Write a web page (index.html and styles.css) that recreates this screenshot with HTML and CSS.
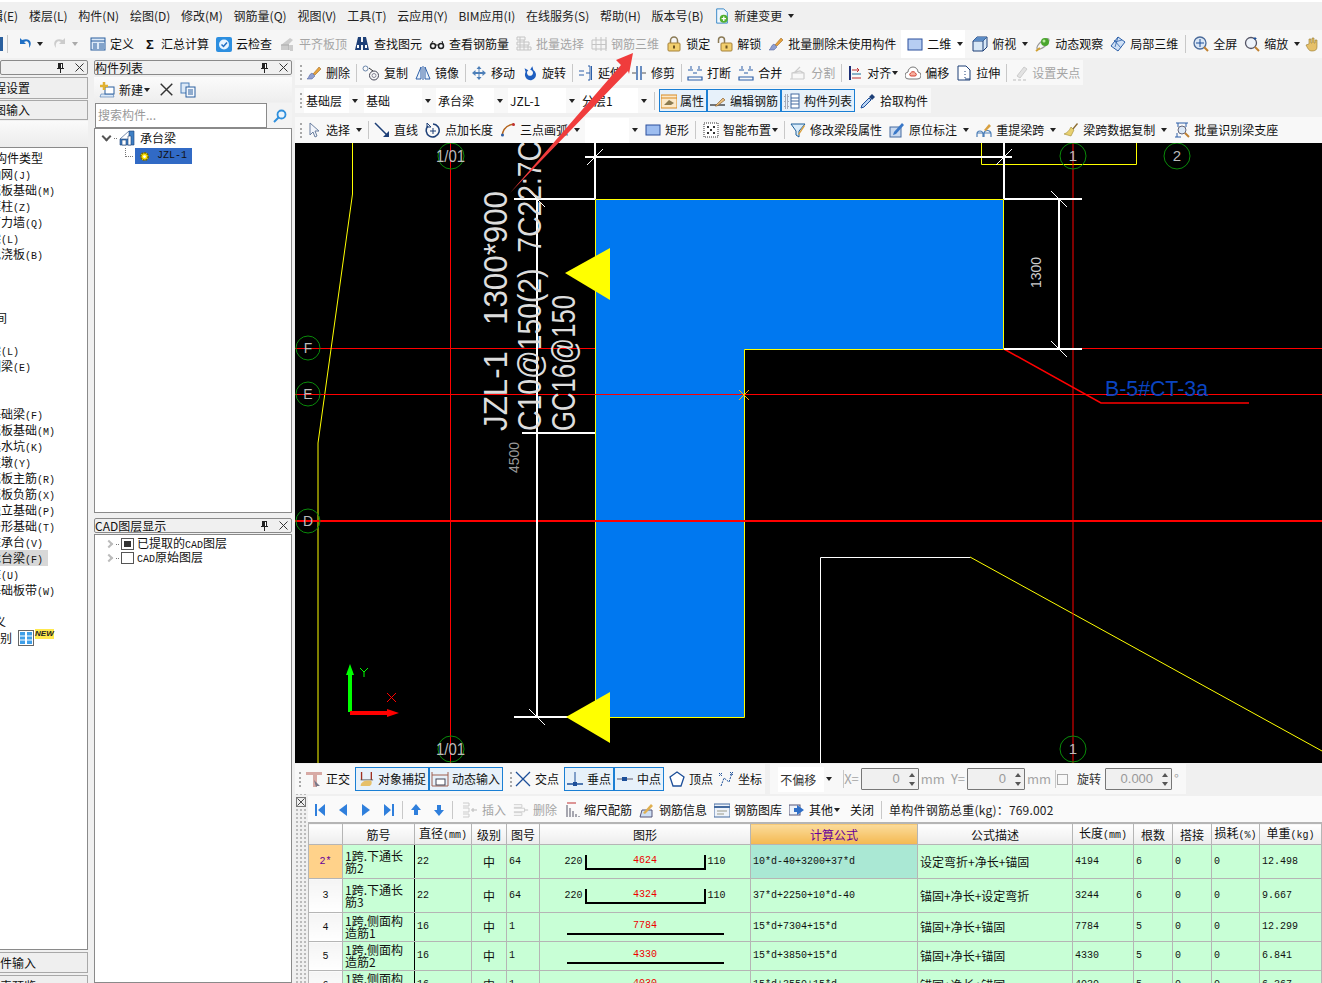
FILE: index.html
```html
<!DOCTYPE html>
<html lang="zh-CN">
<head>
  <meta charset="UTF-8" />
  <title>钢筋算量</title>
  <link rel="stylesheet" href="styles.css">
</head>
<body>
<svg class="defs">
  <symbol id="undo" viewBox="0 0 16 16"><path d="M3 2v6h6L7 6c3-2 6 0 5 6 4-5 1-11-7-8z" fill="#1f6fc4"/></symbol>
  <symbol id="redo" viewBox="0 0 16 16"><path d="M13 2v6H7l2-2c-3-2-6 0-5 6-4-5-1-11 7-8z" fill="#ccc"/></symbol>
  <symbol id="def" viewBox="0 0 16 16"><rect x="1" y="2" width="14" height="12" fill="#dce9f7" stroke="#2a5f9e"/><path d="M1 5h14M9 8h5M9 10h5M9 12h5M3 8h4M3 10h4M3 12h4" stroke="#2a5f9e"/></symbol>
  <symbol id="cloud" viewBox="0 0 16 16"><rect x="0" y="1" width="16" height="15" rx="2" fill="#2d8fe0"/><circle cx="8" cy="8.500" r="5" fill="#e8f4ff"/><path d="M5.500 8.500l2 2 3.500-4" stroke="#1f6fc4" stroke-width="1.500" fill="none"/></symbol>
  <symbol id="flat" viewBox="0 0 16 16"><path d="M2 14V9l9-7 3 2-4 4v6zM11 15V9h3v6z" fill="#ccc"/><path d="M2 9h8v5" stroke="#aaa" fill="none"/></symbol>
  <symbol id="binoc" viewBox="0 0 16 16"><path d="M4 1h3v5h2V1h3l3 13h-6V9H7v5H1z" fill="#1d3f77"/><path d="M3 9h2v3H3zM11 9h2v3h-2z" fill="#fff"/></symbol>
  <symbol id="glass" viewBox="0 0 16 16"><circle cx="4" cy="10" r="2.500" fill="none" stroke="#222" stroke-width="1.500"/><circle cx="12" cy="10" r="2.500" fill="none" stroke="#222" stroke-width="1.500"/><path d="M6 9h4M2 8l2-3M14 8l-1-3" stroke="#222"/></symbol>
  <symbol id="gridg" viewBox="0 0 16 16"><path d="M1 1h8v3H1zM1 6h12v3H1zM1 11h14v3H1zM4 1v13M8 4v10M12 9v5" fill="none" stroke="#c4c4c4"/></symbol>
  <symbol id="grid3" viewBox="0 0 16 16"><path d="M1 4h14v9H1zM1 8.500h14M5 1v14M10 1v14M15 1v14" fill="none" stroke="#c4c4c4"/></symbol>
  <symbol id="lock" viewBox="0 0 16 16"><path d="M4.500 7V4.500a3.500 3.500 0 0 1 7 0V7" fill="none" stroke="#8a7a55" stroke-width="1.500"/><rect x="2" y="7" width="12" height="8" rx="1" fill="#f2cf6e" stroke="#a5813a"/><rect x="7" y="9.500" width="2" height="3" fill="#6b5220"/></symbol>
  <symbol id="unlock" viewBox="0 0 16 16"><path d="M1.500 7V4a3 3 0 0 1 6 0v3" fill="none" stroke="#8a7a55" stroke-width="1.500"/><rect x="4" y="7" width="11" height="8" rx="1" fill="#f2cf6e" stroke="#a5813a"/><rect x="8.500" y="9.500" width="2" height="3" fill="#6b5220"/></symbol>
  <symbol id="brush" viewBox="0 0 16 16"><path d="M7 9l6-7 2 2-6 6z" fill="#e8a23c" stroke="#8a5a18" stroke-width=".5"/><path d="M6 8l3 3-3 3H1c2-1 2-5 5-6z" fill="#8f9fd0" stroke="#4a5a99" stroke-width=".5"/></symbol>
  <symbol id="sq2d" viewBox="0 0 16 16"><rect x="1" y="3" width="14" height="11" fill="#b6cdf2" stroke="#2b4f9b"/></symbol>
  <symbol id="cube" viewBox="0 0 16 16"><path d="M1 5l4-4h10v10l-4 4H1z" fill="#d7e7f6" stroke="#1d3f77"/><path d="M1 5h10v10M11 5l4-4" fill="none" stroke="#1d3f77"/><path d="M5 1h10l-4 4H1z" fill="#5b8bc4"/></symbol>
  <symbol id="orbit" viewBox="0 0 16 16"><ellipse cx="8" cy="8" rx="7.500" ry="3" transform="rotate(-40 8 8)" fill="none" stroke="#999" stroke-width="1.200"/><circle cx="10" cy="6" r="4" fill="#4aa62d"/><circle cx="9" cy="5" r="1.500" fill="#b9e8a2"/><path d="M1 15l4-3" stroke="#d0a030" stroke-width="2"/></symbol>
  <symbol id="local" viewBox="0 0 16 16"><path d="M8 1l7 5-7 9-7-5z" fill="#cfe0f5" stroke="#2c5fa8"/><path d="M4 4l7 8M8 1l-3 10M12 4L5 6" stroke="#2c5fa8" fill="none" stroke-width=".8"/></symbol>
  <symbol id="zoomf" viewBox="0 0 16 16"><circle cx="7" cy="7" r="6" fill="#dbe7f5" stroke="#4a6a99" stroke-width="1.300"/><path d="M7 3v8M3 7h8" stroke="#1d4f99"/><path d="M11 11l4 4" stroke="#c08030" stroke-width="2"/></symbol>
  <symbol id="zoomz" viewBox="0 0 16 16"><circle cx="7" cy="7" r="5.500" fill="#eef3fa" stroke="#556" stroke-width="1.300"/><path d="M11 11l4 4" stroke="#c08030" stroke-width="2"/><path d="M11 1v3M12.500 2.500h-3" stroke="#1d4f99"/></symbol>
  <symbol id="hand" viewBox="0 0 16 16"><path d="M3 9l3-1V3h2v4h1V2h2v5h1V4h2v7c0 3-2 4-5 4-3 0-4-2-6-6z" fill="#e6c069" stroke="#96782f" stroke-width=".6"/></symbol>
  <symbol id="copy" viewBox="0 0 18 16"><rect x="1" y="1" width="5" height="5" rx="2.500" fill="none" stroke="#6a86aa"/><circle cx="12" cy="10.500" r="4.500" fill="none" stroke="#445"/><circle cx="12" cy="10.500" r="2" fill="none" stroke="#889"/><path d="M7 3l4 3" stroke="#333"/></symbol>
  <symbol id="mirror" viewBox="0 0 16 16"><path d="M6 2L1 14h5zM10 2l5 12h-5z" fill="#eaf2fb" stroke="#2c5fa8"/><path d="M8 1v14" stroke="#2c5fa8"/></symbol>
  <symbol id="move" viewBox="0 0 16 16"><path d="M8 1l2.500 3h-2v3h3V5L15 8l-3.500 3V9h-3v3h2L8 15l-2.500-3h2V9h-3v2L1 8l3.500-3v2h3V4h-2z" fill="#4d7fb8"/></symbol>
  <symbol id="rotate" viewBox="0 0 16 16"><path d="M4 2v4a5.500 5.500 0 1 0 8 0V2l-3 3a3 3 0 1 1-2 0z" fill="#1f5fc0" transform="rotate(-15 8 8)"/></symbol>
  <symbol id="extend" viewBox="0 0 16 16"><path d="M13.500 1v14M1 6h5M1 10h5M8 8h4" stroke="#2c5fa8" fill="none"/><path d="M10 1h2v14h-2" stroke="#2c5fa8" fill="none"/></symbol>
  <symbol id="trim" viewBox="0 0 16 16"><path d="M6 1v14M10 1v14" stroke="#2c5fa8" stroke-width="1.400"/><path d="M1 8h4M11 8h4" stroke="#555"/></symbol>
  <symbol id="break" viewBox="0 0 16 16"><path d="M1 12h14v3H1zM1 5h5M10 5h5" fill="none" stroke="#2c5fa8" stroke-width="1.200"/><path d="M4 1v3M12 1v3M6 8h4" stroke="#2c5fa8"/></symbol>
  <symbol id="split" viewBox="0 0 18 16"><path d="M1 14h14M3 14V8l8-2 4 2v6M3 8l12 0M11 2L5 8" fill="none" stroke="#ccc" stroke-width="1.200"/></symbol>
  <symbol id="align" viewBox="0 0 16 16"><path d="M3 1v14" stroke="#1d2f77" stroke-width="2"/><path d="M5 13h9M5 5h7l-2-2M12 5l-2 2" stroke="#c03030" fill="none"/><path d="M5 9h9" stroke="#1d6f99"/></symbol>
  <symbol id="offset" viewBox="0 0 16 16"><path d="M4 14a3.500 3.500 0 0 1-1-7 5 5 0 0 1 10 0 3.500 3.500 0 0 1-1 7z" fill="#fff" stroke="#777"/><path d="M5.500 11a2 2 0 0 1 0-3 3 3 0 0 1 5 0 2 2 0 0 1 0 3z" fill="#f8b0a0" stroke="#d04030"/></symbol>
  <symbol id="stretch" viewBox="0 0 16 16"><path d="M2 1h8l4 4v10H2z" fill="#fff" stroke="#1d3f77"/><path d="M9 6v1M9 9v1M9 12v1M9 14h5" stroke="#1d3f77"/></symbol>
  <symbol id="pen" viewBox="0 0 16 16"><path d="M5 11L12 2l3 2-7 9z" fill="#e2e2e2" stroke="#ccc"/><path d="M1 15h3M6 15h3M11 15h3" stroke="#bbb"/></symbol>
  <symbol id="cursor" viewBox="0 0 16 16"><path d="M4 1v12l3-3 2 5 2-1-2-5h4z" fill="#f2f5fb" stroke="#6a7f9f"/></symbol>
  <symbol id="line" viewBox="0 0 16 16"><path d="M1 1l13 13" stroke="#1d3f77" stroke-width="1.500"/><path d="M15 9v6H9z" fill="#1d3f77"/></symbol>
  <symbol id="ptlen" viewBox="0 0 16 16"><path d="M3 4a6.500 6.500 0 1 0 5-2" fill="none" stroke="#1d3f77" stroke-width="1.500"/><path d="M2 1v4h4zM8 6v6M5 9h6" stroke="#1d3f77" fill="none"/></symbol>
  <symbol id="arc" viewBox="0 0 16 16"><path d="M2 14C3 6 7 3 14 2" fill="none" stroke="#b5651d" stroke-width="1.500"/><circle cx="2.500" cy="13" r="1.500" fill="#2c5fa8"/><circle cx="13.500" cy="2.500" r="1.500" fill="#c03030"/></symbol>
  <symbol id="rect" viewBox="0 0 16 16"><rect x="1" y="3" width="14" height="10" fill="#9dbdf0" stroke="#2b4f9b"/></symbol>
  <symbol id="smart" viewBox="0 0 16 16"><rect x="1" y="1" width="14" height="14" fill="#fff" stroke="#333" stroke-dasharray="1 1"/><path d="M4 4h2v2H4zM10 4h2v2h-2zM4 10h2v2H4zM10 10h2v2h-2zM7 7h2v2H7z" fill="#333"/></symbol>
  <symbol id="funnel" viewBox="0 0 16 16"><path d="M1 2h14L9 9v6l-3-2V9z" fill="#d9ecfa" stroke="#1d5f99"/><path d="M8 12l6-9 1 1-6 9z" fill="#d8a040"/></symbol>
  <symbol id="mark" viewBox="0 0 16 16"><rect x="1" y="5" width="11" height="10" fill="#c9d9ef" stroke="#446a9f"/><path d="M5 10l8-9 2 2-8 9-3 1z" fill="#3a78c8"/></symbol>
  <symbol id="respan" viewBox="0 0 16 16"><path d="M1 15v-3a3 3 0 0 1 6 0v3M8 15v-3a3 3 0 0 1 7 0v3M1 11h14" fill="none" stroke="#4d7fb8" stroke-width="1.200"/><path d="M8 8l5-6 2 2-5 5z" fill="#d8a040"/></symbol>
  <symbol id="broom" viewBox="0 0 16 16"><path d="M9 7l5-6 1 1-5 6z" fill="#8a6a30"/><path d="M8 5l3 3-3 6-7-2c3-1 5-3 7-7z" fill="#e8d070" stroke="#a08a30" stroke-width=".6"/></symbol>
  <symbol id="batch" viewBox="0 0 16 16"><path d="M2 1h12M4 1v4M12 1v4" stroke="#2c5fa8"/><path d="M1 15h6M3 11v4" stroke="#2c5fa8"/><circle cx="8" cy="8" r="4" fill="#dce9f7" stroke="#667"/><path d="M11 11l4 4" stroke="#c08030" stroke-width="2"/></symbol>
  <symbol id="prop" viewBox="0 0 16 16"><rect x="0" y="2" width="16" height="13" fill="#fbe8c8" stroke="#d98a20"/><path d="M0 5h16" stroke="#d98a20"/><path d="M3 12l5-5 5 3-3 2z" fill="#8a7a50"/></symbol>
  <symbol id="edit" viewBox="0 0 18 16"><path d="M1 12h15" stroke="#222" stroke-width="1.200"/><path d="M6 13l8-8 2 2-8 6z" fill="#e8c080" stroke="#805020" stroke-width=".6"/></symbol>
  <symbol id="list" viewBox="0 0 16 16"><path d="M1 2h3v3H1zM1 7h3v3H1zM1 12h3v3H1z" fill="none" stroke="#667" stroke-dasharray="1 1"/><rect x="7" y="1" width="8" height="14" fill="#fff" stroke="#446a9f"/><path d="M7 5h8M7 8h8M7 11h8" stroke="#446a9f"/></symbol>
  <symbol id="drop" viewBox="0 0 16 16"><path d="M1 15l1-3 7-7 2 2-7 7z" fill="#b9d4f5" stroke="#1d4f99"/><path d="M9 4l3-3 3 3-3 3z" fill="#1d3f77"/></symbol>
  <symbol id="ortho" viewBox="0 0 16 16"><path d="M0 1h16v3h-5v12H7V4H0z" fill="#d8aaa5"/><path d="M8 9l6 6-3 0-1 1z" fill="#778"/></symbol>
  <symbol id="snap" viewBox="0 0 18 18"><path d="M4 1v9M15 1v9" stroke="#a03020" stroke-width="1.500"/><path d="M3 10h14" stroke="#555"/><path d="M3 17c0-5 5-7 12-6 1 3 0 6-3 6z" fill="#e6c069"/></symbol>
  <symbol id="dyn" viewBox="0 0 18 16"><path d="M1 1v14h16V1M1 4h16" fill="none" stroke="#a06050"/><rect x="5" y="8" width="9" height="6" fill="#fff" stroke="#445"/></symbol>
  <symbol id="cross" viewBox="0 0 16 16"><path d="M1 1l14 14M15 1L1 15" stroke="#1d4f99" stroke-width="1.300"/></symbol>
  <symbol id="perp" viewBox="0 0 16 16"><path d="M0 13h16" stroke="#1d4f99" stroke-width="1.500"/><path d="M8 1v12" stroke="#1d4f99"/><rect x="6" y="11" width="4" height="4" fill="#1d4f99"/></symbol>
  <symbol id="midp" viewBox="0 0 16 16"><path d="M0 8h16" stroke="#889" stroke-width="1.500"/><rect x="5" y="6" width="5" height="4" fill="#1d4f99"/></symbol>
  <symbol id="vert" viewBox="0 0 16 16"><path d="M8 1l7 5-3 9H4L1 6z" fill="#fff" stroke="#1d4f99" stroke-width="1.300"/></symbol>
  <symbol id="coord" viewBox="0 0 16 16"><path d="M3 15l3-8 5 4 3-9M1 2l3 3M4 2L1 5M12 1l3 3M15 1l-3 3" fill="none" stroke="#1d4f99" stroke-dasharray="2 1"/></symbol>
  <symbol id="first" viewBox="0 0 12 14"><path d="M1 1h2v12H1zM11 1v12L4 7z" fill="#2f7fdc"/></symbol>
  <symbol id="prev" viewBox="0 0 12 14"><path d="M10 1v12L2 7z" fill="#2f7fdc"/></symbol>
  <symbol id="next" viewBox="0 0 12 14"><path d="M2 1v12l8-6z" fill="#2f7fdc"/></symbol>
  <symbol id="last" viewBox="0 0 12 14"><path d="M11 1H9v12h2zM1 1v12l7-6z" fill="#2f7fdc"/></symbol>
  <symbol id="up" viewBox="0 0 12 14"><path d="M6 1l5 6H8v5H4V7H1z" fill="#2f7fdc"/></symbol>
  <symbol id="down" viewBox="0 0 12 14"><path d="M6 13l5-6H8V2H4v5H1z" fill="#2f7fdc"/></symbol>
  <symbol id="ins" viewBox="0 0 16 16"><path d="M1 1h6v3H1M1 12h6v3H1M1 6h6v4H1" fill="none" stroke="#ccc"/><path d="M9 8h6M11 6v4" stroke="#bbb"/></symbol>
  <symbol id="del" viewBox="0 0 18 16"><path d="M1 2h9v3H1M1 11h9v3H1M1 6h12v4H1" fill="none" stroke="#ccc"/><path d="M13 8h4" stroke="#bbb"/></symbol>
  <symbol id="scale" viewBox="0 0 14 16"><path d="M1 15V3M4 15V6M7 15V9M10 15v-3M13 15v-1" stroke="#556"/><path d="M1 1h9" stroke="#c03030"/></symbol>
  <symbol id="info" viewBox="0 0 16 16"><path d="M1 15l2-7h10v7z" fill="#cfe0f5" stroke="#557"/><path d="M4 11l8-9 2 2-8 8z" fill="#e0b050"/></symbol>
  <symbol id="lib" viewBox="0 0 16 16"><rect x="0" y="2" width="16" height="13" fill="#eef3fa" stroke="#446a9f"/><path d="M0 5h16" stroke="#446a9f" stroke-width="2"/><path d="M3 9h10M3 12h7" stroke="#998"/></symbol>
  <symbol id="other" viewBox="0 0 16 16"><rect x="0" y="3" width="11" height="10" fill="#eef3fa" stroke="#557"/><path d="M8 3l7 5-7 5V10H5V6h3z" fill="#2f6fc8"/></symbol>
  <symbol id="newc" viewBox="0 0 16 16"><path d="M1 15l1-3h12l1 3z" fill="#dce9f7" stroke="#2a5f9e" stroke-width=".5"/><rect x="6" y="5" width="9" height="7" fill="#fff" stroke="#2a5f9e"/><path d="M5 0v8M1 4h8" stroke="#e0b030" stroke-width="2.500"/></symbol>
  <symbol id="clone" viewBox="0 0 16 16"><rect x="1" y="1" width="8" height="10" fill="#dce9f7" stroke="#4d7fb8"/><rect x="6" y="5" width="9" height="10" fill="#f4f8fd" stroke="#2a5f9e"/><path d="M8 8h5M8 10h5M8 12h5" stroke="#2a5f9e"/></symbol>
  <symbol id="file" viewBox="0 0 16 18"><path d="M2 1h8l4 4v12H2z" fill="#eef6fd" stroke="#2a7fc4"/><circle cx="10" cy="12" r="4.500" fill="#52b030"/><path d="M10 9.500v5M7.500 12h5" stroke="#fff" stroke-width="1.500"/></symbol>
  <symbol id="pin" viewBox="0 0 9 11"><path d="M2 1h5v5h1v1H1V6h1zM4 7h1v4H4z" fill="#222"/><path d="M5 2h1v4H5z" fill="#fff"/></symbol>
  <symbol id="close" viewBox="0 0 9 9"><path d="M.5.500l8 8M8.500.500l-8 8" stroke="#333" fill="none"/></symbol>
  <symbol id="beam" viewBox="0 0 16 16"><path d="M1 15V9l9-8h5v14zM1 9h9V1" fill="#3f7fc4" stroke="#1d3f77" stroke-width=".6"/><path d="M3 10h4v5H3zM9 6h3v9H9z" fill="#fff" stroke="#1d3f77" stroke-width=".6"/></symbol>
  <symbol id="gear" viewBox="0 0 12 12"><circle cx="6" cy="6" r="4" fill="#ffe400" stroke="#7a6a00" stroke-width="2" stroke-dasharray="2 1"/><circle cx="6" cy="6" r="1.500" fill="#fff"/></symbol>
  <symbol id="search" viewBox="0 0 14 14"><circle cx="8.500" cy="5.500" r="4" fill="#eaf4fc" stroke="#2f8fdc" stroke-width="1.800"/><path d="M5.500 8.500L1 13" stroke="#2f8fdc" stroke-width="2"/></symbol>
  <symbol id="cadid" viewBox="0 0 16 16"><rect x=".5" y=".5" width="15" height="15" fill="#fff" stroke="#666"/><rect x="2" y="2" width="5" height="12" fill="#3f9fe8"/><rect x="9" y="2" width="5" height="12" fill="#3f9fe8"/><path d="M2 6h5M2 10h5M9 6h5M9 10h5" stroke="#fff"/></symbol>
</svg>

<nav class="menubar">
  <span>编辑(E)</span><span>楼层(L)</span><span>构件(N)</span><span>绘图(D)</span><span>修改(M)</span><span>钢筋量(Q)</span><span>视图(V)</span><span>工具(T)</span><span>云应用(Y)</span><span>BIM应用(I)</span><span>在线服务(S)</span><span>帮助(H)</span><span>版本号(B)</span>
  <span class="ti"><svg class="ic"><use href="#file"/></svg>新建变更<i class="caret wide"></i></span>
</nav>

<div class="toolbar top">
  <span class="stub"></span><span class="sep"></span>
  <svg class="ic"><use href="#undo"/></svg><i class="caret"></i>
  <svg class="ic redo"><use href="#redo"/></svg><i class="caret pale"></i>
  <span class="ti first"><svg class="ic"><use href="#def"/></svg>定义</span>
  <span class="ti sum"><b class="sigma">Σ</b>汇总计算</span>
  <span class="ti"><svg class="ic"><use href="#cloud"/></svg>云检查</span>
  <span class="ti off"><svg class="ic"><use href="#flat"/></svg>平齐板顶</span>
  <span class="ti"><svg class="ic"><use href="#binoc"/></svg>查找图元</span>
  <span class="ti"><svg class="ic"><use href="#glass"/></svg>查看钢筋量</span>
  <span class="ti off"><svg class="ic"><use href="#gridg"/></svg>批量选择</span>
  <span class="ti off"><svg class="ic"><use href="#grid3"/></svg>钢筋三维</span>
  <span class="ti"><svg class="ic"><use href="#lock"/></svg>锁定</span>
  <span class="ti"><svg class="ic"><use href="#unlock"/></svg>解锁</span>
  <span class="ti"><svg class="ic"><use href="#brush"/></svg>批量删除未使用构件</span>
  <span class="viewbox">
    <span class="ti"><svg class="ic"><use href="#sq2d"/></svg>二维</span><i class="caret wide"></i>
  </span>
  <span class="ti"><svg class="ic"><use href="#cube"/></svg>俯视<i class="caret wide"></i></span>
  <span class="ti"><svg class="ic"><use href="#orbit"/></svg>动态观察</span>
  <span class="ti"><svg class="ic"><use href="#local"/></svg>局部三维</span>
  <span class="sep"></span>
  <span class="ti"><svg class="ic"><use href="#zoomf"/></svg>全屏</span>
  <span class="ti"><svg class="ic"><use href="#zoomz"/></svg>缩放<i class="caret wide"></i></span>
  <svg class="ic hand"><use href="#hand"/></svg>
</div>

<main class="workspace">
  <aside class="nav-panel">
    <div class="titlebar"><span class="grow"></span><svg class="pin"><use href="#pin"/></svg><svg class="cls"><use href="#close"/></svg></div>
    <div class="navbtn"><span>工程设置</span></div>
    <div class="navbtn second"><span>绘图输入</span></div>
    <div class="navtools"></div>
    <ul class="navlist">
      <li class="root">常用构件类型</li>
      <li>轴网<span class="mono">(J)</span></li>
      <li>筏板基础<span class="mono">(M)</span></li>
      <li>框柱<span class="mono">(Z)</span></li>
      <li>剪力墙<span class="mono">(Q)</span></li>
      <li>梁<span class="mono">(L)</span></li>
      <li>现浇板<span class="mono">(B)</span></li>
      <li class="blank"></li><li class="blank"></li><li class="blank"></li>
      <li class="grp">房间</li>
      <li class="blank"></li>
      <li>梁<span class="mono">(L)</span></li>
      <li>圈梁<span class="mono">(E)</span></li>
      <li class="blank"></li><li class="blank"></li>
      <li>基础梁<span class="mono">(F)</span></li>
      <li>筏板基础<span class="mono">(M)</span></li>
      <li>集水坑<span class="mono">(K)</span></li>
      <li>柱墩<span class="mono">(Y)</span></li>
      <li>筏板主筋<span class="mono">(R)</span></li>
      <li>筏板负筋<span class="mono">(X)</span></li>
      <li>独立基础<span class="mono">(P)</span></li>
      <li>条形基础<span class="mono">(T)</span></li>
      <li>桩承台<span class="mono">(V)</span></li>
      <li class="active">承台梁<span class="mono">(F)</span></li>
      <li>桩<span class="mono">(U)</span></li>
      <li>基础板带<span class="mono">(W)</span></li>
      <li class="blank"></li>
      <li class="end">定义</li>
      <li class="cadrow"><span>识别</span><svg class="cadid"><use href="#cadid"/></svg><b class="new">NEW</b></li>
    </ul>
    <div class="navbtn low"><span>构件输入</span></div>
    <div class="navbtn low"><span>报表预览</span></div>
  </aside>

  <section class="comp-panel">
    <div class="titlebar"><span class="grow">构件列表</span><svg class="pin"><use href="#pin"/></svg><svg class="cls"><use href="#close"/></svg></div>
    <div class="comp-tools">
      <span class="ti"><svg class="ic"><use href="#newc"/></svg>新建<i class="caret"></i></span>
      <svg class="bigx"><use href="#close"/></svg>
      <svg class="ic"><use href="#clone"/></svg>
    </div>
    <div class="searchrow">
      <div class="searchbox">搜索构件...</div>
      <div class="searchbtn"><svg class="sico"><use href="#search"/></svg></div>
    </div>
    <div class="tree main-tree">
      <div class="node"><i class="chev"></i><i class="dots"></i><svg class="ic"><use href="#beam"/></svg><span>承台梁</span></div>
      <div class="node leaf"><i class="elbow"></i><span class="picked"><svg class="gear"><use href="#gear"/></svg><span class="mono">JZL-1</span></span></div>
    </div>
    <div class="titlebar cadbar"><span class="grow">CAD图层显示</span><svg class="pin"><use href="#pin"/></svg><svg class="cls"><use href="#close"/></svg></div>
    <div class="tree cad-tree">
      <div class="layer"><i class="chev-r"></i><i class="dots"></i><i class="check on"></i><span>已提取的<span class="mono">CAD</span>图层</span></div>
      <div class="layer"><i class="chev-r"></i><i class="dots"></i><i class="check"></i><span><span class="mono">CAD</span>原始图层</span></div>
    </div>
  </section>

  <section class="editor">
    <div class="row-a">
      <div class="toolbar block">
        <i class="grip"></i>
        <span class="ti"><svg class="ic"><use href="#brush"/></svg>删除</span><span class="sep"></span>
        <span class="ti"><svg class="ic w18"><use href="#copy"/></svg>复制</span>
        <span class="ti"><svg class="ic"><use href="#mirror"/></svg>镜像</span><span class="sep"></span>
        <span class="ti"><svg class="ic"><use href="#move"/></svg>移动</span>
        <span class="ti"><svg class="ic"><use href="#rotate"/></svg>旋转</span><span class="sep"></span>
        <span class="ti"><svg class="ic"><use href="#extend"/></svg>延伸</span>
        <span class="ti nudge"><svg class="ic"><use href="#trim"/></svg>修剪</span><span class="sep"></span>
        <span class="ti"><svg class="ic"><use href="#break"/></svg>打断</span>
        <span class="ti"><svg class="ic"><use href="#break"/></svg>合并</span>
        <span class="ti off"><svg class="ic w18"><use href="#split"/></svg>分割</span><span class="sep"></span>
        <span class="ti"><svg class="ic"><use href="#align"/></svg>对齐<i class="caret"></i></span>
        <span class="ti"><svg class="ic"><use href="#offset"/></svg>偏移</span>
        <span class="ti"><svg class="ic"><use href="#stretch"/></svg>拉伸</span><span class="sep"></span>
        <span class="ti off"><svg class="ic"><use href="#pen"/></svg>设置夹点</span>
      </div>
    </div>
    <div class="row-b">
      <div class="toolbar block">
        <i class="grip"></i>
        <span class="combo c1"><span class="val">基础层</span><i class="caret"></i></span>
        <span class="combo c2"><span class="val">基础</span><i class="caret"></i></span>
        <span class="combo c2"><span class="val">承台梁</span><i class="caret"></i></span>
        <span class="combo c2"><span class="val">JZL-1</span><i class="caret"></i></span>
        <span class="combo c2"><span class="val">分层1</span><i class="caret"></i></span>
        <span class="sep"></span>
        <span class="tog"><svg class="ic"><use href="#prop"/></svg>属性</span>
        <span class="tog"><svg class="ic w18"><use href="#edit"/></svg>编辑钢筋</span>
        <span class="tog"><svg class="ic w18"><use href="#list"/></svg>构件列表</span>
        <span class="ti pick"><svg class="ic"><use href="#drop"/></svg>拾取构件</span>
      </div>
    </div>
    <div class="row-c">
      <div class="toolbar block full">
        <i class="grip"></i>
        <span class="ti"><svg class="ic"><use href="#cursor"/></svg>选择<i class="caret wide"></i></span><span class="sep"></span>
        <span class="ti"><svg class="ic"><use href="#line"/></svg>直线</span>
        <span class="ti"><svg class="ic"><use href="#ptlen"/></svg>点加长度</span>
        <span class="ti"><svg class="ic"><use href="#arc"/></svg>三点画弧<i class="caret wide"></i></span>
        <span class="combo c3"><span class="val"></span><i class="caret"></i></span>
        <span class="ti"><svg class="ic"><use href="#rect"/></svg>矩形</span><span class="sep"></span>
        <span class="ti nudge"><svg class="ic"><use href="#smart"/></svg>智能布置<i class="caret"></i></span><span class="sep"></span>
        <span class="ti"><svg class="ic"><use href="#funnel"/></svg>修改梁段属性</span>
        <span class="ti"><svg class="ic"><use href="#mark"/></svg>原位标注<i class="caret wide"></i></span>
        <span class="ti"><svg class="ic"><use href="#respan"/></svg>重提梁跨<i class="caret wide"></i></span>
        <span class="ti"><svg class="ic"><use href="#broom"/></svg>梁跨数据复制<i class="caret wide"></i></span>
        <span class="ti"><svg class="ic"><use href="#batch"/></svg>批量识别梁支座</span>
      </div>
    </div>

    <svg class="cad" viewBox="295 144 1027 620">
      <path d="M295 349.500H1322" stroke="#f00"/>
      <path d="M352.500 144V195L318 444V764M981.500 144V165.500H1136.500V144M970 558L1322 752" stroke="#ff0" fill="none"/>
      <path d="M820.500 764V558.500H970" stroke="#fff" fill="none"/>
      <polygon points="595.500,200.500 1003.500,200.500 1003.500,350.500 744.500,350.500 744.500,718.500 595.500,718.500" fill="#0078f0" stroke="#ff0"/>
      <path d="M295 395.500H1322" stroke="#f00"/>
      <path d="M295 522H1322" stroke="#f00" stroke-width="2"/>
      <path d="M450.500 144V764M1073 144V764" stroke="#f00"/>
      <path d="M1004 350L1101 404H1249" stroke="#f00" stroke-width="1.500" fill="none"/>
      <g stroke="#fff" stroke-width="2" fill="none">
        <path d="M595 144V200M1004 144V200M585 158H1012"/>
        <path d="M514 200H595M522 434H595M514 718H595M537 200V718"/>
        <path d="M1004 200H1082M1004 350H1082M1059 200V350"/>
      </g>
      <path d="M587 166l16-16M996 166l16-16M529 192l16 16M529 710l16 16M1051 192l16 16M1051 342l16 16" stroke="#fff"/>
      <polygon points="565,274 610,249 610,301" fill="#ff0"/>
      <polygon points="566,718 610,693 610,744" fill="#ff0"/>
      <path d="M739 391l10 10M749 391l-10 10" stroke="#ffb400"/>
      <g fill="none" stroke="#0a8a0a">
        <circle cx="451" cy="157" r="13"/><circle cx="1073" cy="157" r="13"/><circle cx="1177" cy="157" r="13"/>
        <circle cx="308" cy="349" r="12"/><circle cx="308" cy="395" r="12"/><circle cx="308" cy="522" r="12"/>
        <circle cx="451" cy="750" r="13"/><circle cx="1073" cy="750" r="13"/>
      </g>
      <g class="axis-label">
        <text x="436" y="163" textLength="29" lengthAdjust="spacingAndGlyphs">1/01</text><text x="1073" y="162">1</text><text x="1177" y="162">2</text>
        <text class="sm" x="308" y="354">F</text><text class="sm" x="308" y="400">E</text><text class="sm" x="308" y="527">D</text>
        <text x="436" y="756" textLength="29" lengthAdjust="spacingAndGlyphs">1/01</text><text x="1073" y="755">1</text>
      </g>
      <g class="note">
        <text transform="translate(507 432) rotate(-90)" textLength="240" lengthAdjust="spacingAndGlyphs">JZL-1   1300*900</text>
        <text transform="translate(541 432) rotate(-90)" textLength="290" lengthAdjust="spacingAndGlyphs">C10@150(2)  7C22:7C</text>
        <text transform="translate(575 432) rotate(-90)" textLength="136" lengthAdjust="spacingAndGlyphs">GC16@150</text>
      </g>
      <text class="dim faint" transform="translate(519 474) rotate(-90)">4500</text>
      <text class="dim" transform="translate(1041 289) rotate(-90)">1300</text>
      <text class="label" x="1105" y="397" textLength="103" lengthAdjust="spacingAndGlyphs">B-5#CT-3a</text>
      <path d="M350 713V672" stroke="#0f0" stroke-width="4"/><polygon points="350,665 346,676 354,676" fill="#0f0"/>
      <path d="M350 714H388" stroke="#f00" stroke-width="4"/><polygon points="399,714 387,710 387,718" fill="#f00"/>
      <path d="M360 669l4 4 4-4M364 673v5" stroke="#0f0" fill="none"/>
      <path d="M387 694l9 9M396 694l-9 9" stroke="#f00"/>
    </svg>

    <div class="snapbar">
      <div class="toolbar block">
        <i class="grip"></i>
        <span class="ti ortho"><svg class="ic"><use href="#ortho"/></svg>正交</span>
        <span class="tog"><svg class="ic w18"><use href="#snap"/></svg>对象捕捉</span>
        <span class="tog"><svg class="ic w18"><use href="#dyn"/></svg>动态输入</span>
      </div>
      <div class="toolbar block">
        <i class="grip"></i>
        <span class="ti"><svg class="ic"><use href="#cross"/></svg>交点</span>
        <span class="tog pt"><svg class="ic"><use href="#perp"/></svg>垂点</span>
        <span class="tog pt"><svg class="ic"><use href="#midp"/></svg>中点</span>
        <span class="ti"><svg class="ic"><use href="#vert"/></svg>顶点</span>
        <span class="ti"><svg class="ic"><use href="#coord"/></svg>坐标</span>
      </div>
      <div class="toolbar block coords">
        <span class="combo c4"><span class="val">不偏移</span><i class="caret"></i></span>
        <span class="sep"></span>
        <span class="off">X=</span><span class="spin">0<i class="arrows"></i></span><span class="off">mm</span>
        <span class="off gapl">Y=</span><span class="spin">0<i class="arrows"></i></span><span class="off">mm</span>
        <span class="sep gapl"></span>
        <i class="check pale"></i><span class="rot">旋转</span>
        <span class="spin wide">0.000<i class="arrows"></i></span><span class="off">°</span>
      </div>
    </div>

    <div class="rebar">
      <div class="dock"><svg class="dockx"><use href="#close"/></svg></div>
      <div class="rebar-main">
        <div class="rebar-tools">
          <svg class="nv"><use href="#first"/></svg><svg class="nv"><use href="#prev"/></svg><svg class="nv"><use href="#next"/></svg><svg class="nv"><use href="#last"/></svg>
          <span class="sep navsep"></span>
          <svg class="nv"><use href="#up"/></svg><svg class="nv"><use href="#down"/></svg>
          <span class="sep navsep"></span>
          <span class="ti off nudge"><svg class="ic"><use href="#ins"/></svg>插入</span>
          <span class="ti off"><svg class="ic"><use href="#del"/></svg>删除</span>
          <span class="ti nudge"><svg class="ic w14"><use href="#scale"/></svg>缩尺配筋</span>
          <span class="ti"><svg class="ic"><use href="#info"/></svg>钢筋信息</span>
          <span class="ti"><svg class="ic"><use href="#lib"/></svg>钢筋图库</span>
          <span class="ti"><svg class="ic"><use href="#other"/></svg>其他<i class="caret"></i></span>
          <span class="shut">关闭</span>
          <span class="sep"></span>
          <span class="total">单构件钢筋总重(kg)：769.002</span>
        </div>
        <table class="rebar-table">
          <colgroup><col class="c-head"><col class="c-name"><col class="c-dia"><col class="c-grade"><col class="c-fig"><col class="c-shape"><col class="c-calc"><col class="c-desc"><col class="c-len"><col class="c-num"><col class="c-lap"><col class="c-loss"><col class="c-wt"></colgroup>
          <thead>
            <tr><th></th><th>筋号</th><th>直径<span class="mono">(mm)</span></th><th>级别</th><th>图号</th><th>图形</th><th class="cur">计算公式</th><th>公式描述</th><th>长度<span class="mono">(mm)</span></th><th>根数</th><th>搭接</th><th>损耗<span class="mono">(%)</span></th><th>单重<span class="mono">(kg)</span></th></tr>
          </thead>
          <tbody>
            <tr class="tall">
              <th class="sel">2*</th><td class="name">1跨.下通长筋2</td><td class="mono">22</td><td class="ctr">中</td><td class="mono">64</td>
              <td><div class="shape"><span class="mono">220</span><span class="hook">4624</span><span class="mono">110</span></div></td>
              <td class="mono focus">10*d-40+3200+37*d</td><td>设定弯折+净长+锚固</td><td class="mono">4194</td><td class="mono">6</td><td class="mono">0</td><td class="mono">0</td><td class="mono">12.498</td>
            </tr>
            <tr class="tall">
              <th>3</th><td class="name">1跨.下通长筋3</td><td class="mono">22</td><td class="ctr">中</td><td class="mono">64</td>
              <td><div class="shape"><span class="mono">220</span><span class="hook">4324</span><span class="mono">110</span></div></td>
              <td class="mono">37*d+2250+10*d-40</td><td>锚固+净长+设定弯折</td><td class="mono">3244</td><td class="mono">6</td><td class="mono">0</td><td class="mono">0</td><td class="mono">9.667</td>
            </tr>
            <tr>
              <th>4</th><td class="name">1跨.侧面构造筋1</td><td class="mono">16</td><td class="ctr">中</td><td class="mono">1</td>
              <td><div class="shape"><span class="bar">7784</span></div></td>
              <td class="mono">15*d+7304+15*d</td><td>锚固+净长+锚固</td><td class="mono">7784</td><td class="mono">5</td><td class="mono">0</td><td class="mono">0</td><td class="mono">12.299</td>
            </tr>
            <tr>
              <th>5</th><td class="name">1跨.侧面构造筋2</td><td class="mono">16</td><td class="ctr">中</td><td class="mono">1</td>
              <td><div class="shape"><span class="bar">4330</span></div></td>
              <td class="mono">15*d+3850+15*d</td><td>锚固+净长+锚固</td><td class="mono">4330</td><td class="mono">5</td><td class="mono">0</td><td class="mono">0</td><td class="mono">6.841</td>
            </tr>
            <tr>
              <th>6</th><td class="name">1跨.侧面构造筋3</td><td class="mono">16</td><td class="ctr">中</td><td class="mono">1</td>
              <td><div class="shape"><span class="bar">4030</span></div></td>
              <td class="mono">15*d+3550+15*d</td><td>锚固+净长+锚固</td><td class="mono">4030</td><td class="mono">5</td><td class="mono">0</td><td class="mono">0</td><td class="mono">6.367</td>
            </tr>
          </tbody>
        </table>
      </div>
    </div>
  </section>
</main>

<svg class="callout" viewBox="0 0 1322 983"><polygon points="633,53 616,60 621,65 510,193 628,71 629,74" fill="#f03c3c"/></svg>
</body>
</html>
```

FILE: styles.css
```css
* { box-sizing: border-box; }
html, body { margin: 0; height: 100%; }
body {
  position: relative;
  width: 1322px;
  height: 983px;
  overflow: hidden;
  background: #f0f0f0;
  color: #111;
  font: 12px/16px "Noto Sans CJK SC", "Liberation Sans", sans-serif;
}
.defs { display: none; }
.mono { font-family: "Liberation Mono", "Noto Sans CJK SC", monospace; font-size: 10px; }
.grow { flex: 1; min-width: 0; }

/* Menu and top toolbar */
.menubar { display: flex; align-items: center; gap: 10.75px; height: 30px; margin-left: -21px; border-top: 2px solid #fff; white-space: nowrap; color: #222; }
.toolbar { display: flex; align-items: center; gap: 7px; white-space: nowrap; }
.toolbar.top { height: 28px; background: #f6f6f6; }
.ti { display: inline-flex; align-items: center; gap: 4px; flex: none; }
.ti.first { margin-left: 5px; }
.ti.sum { margin-left: 3px; }
.ti.nudge { margin-left: 2px; }
.off, .off .ic { color: #a5a5a5; }
.ic { width: 16px; height: 16px; flex: none; }
.ic.w18 { width: 18px; }
.ic.w14 { width: 14px; }
.ic.redo { margin-left: 2px; }
.ic.hand { margin-left: -4px; }
.sigma { width: 12px; margin-right: 1px; font: bold 13px "Liberation Sans", sans-serif; text-align: center; }
.stub { width: 3px; height: 14px; margin-right: -3px; background: #2a5f9e; flex: none; }
.sep { width: 1px; height: 18px; background: #c8c8c8; flex: none; }
.top > .sep:nth-child(2) { margin-right: 2px; }
.caret { display: inline-block; width: 0; height: 0; margin-left: -3px; border: 3px solid transparent; border-top: 4px solid #222; border-bottom: 0; flex: none; }
.caret.wide { margin-left: 2px; }
.caret.pale { border-top-color: #aaa; }
.viewbox { display: inline-flex; align-items: center; gap: 4px; height: 28px; margin-left: -2px; padding: 0 2px 0 6px; background: #fff; }
.grip { width: 3px; height: 15px; margin: 0 -4px 0 2px; border-left: 2px dotted #a8a8a8; flex: none; }

/* Workspace columns */
.workspace { display: flex; height: 923px; margin-top: 2px; }
.nav-panel { display: flex; flex-direction: column; width: 88px; margin-right: 6px; overflow: hidden; }
.comp-panel { display: flex; flex-direction: column; width: 198px; margin-right: 3px; overflow: hidden; }
.titlebar { display: flex; align-items: center; flex: none; height: 15px; border: 1px solid #8a8a8a; border-radius: 2px; background: #f0f0f0; line-height: 13px; white-space: nowrap; overflow: hidden; }
.pin { width: 9px; height: 11px; margin-right: 10px; }
.cls { width: 9px; height: 9px; margin-right: 3px; }

/* Left navigation */
.navbtn { flex: none; height: 22px; margin-top: 2px; border: 1px solid #a8a8a8; border-left: 0; background: #efefef; line-height: 20px; overflow: hidden; white-space: nowrap; }
.navbtn span { margin-left: -18px; }
.navbtn.second { height: 20px; margin-top: 1px; line-height: 18px; }
.navbtn.low { height: 21px; }
.navbtn.low span { margin-left: -12px; }
.navtools { flex: none; height: 26px; margin-top: 1px; background: linear-gradient(#fafafa, #ececec); }
.navlist { flex: none; height: 803px; margin: 0; padding: 2px 0 0; list-style: none; border: 1px solid #8a8a8a; border-left: 0; background: #fff; overflow: hidden; white-space: nowrap; }
.navlist li { height: 16px; margin-left: -11px; }
.navlist .root { margin-left: -29px; }
.navlist .grp { margin-left: -17px; }
.navlist .end { margin-left: -18px; }
.navlist .cadrow { display: flex; align-items: flex-start; margin-left: -12px; }
.navlist .active { width: 59px; background: #d8d8d8; }
.cadid { width: 16px; height: 16px; margin-left: 6px; flex: none; }
.new { margin: -1px 0 0 1px; background: #ffe94d; color: #222; font: italic bold 8px/10px "Liberation Sans", sans-serif; }

/* Component list */
.comp-tools { display: flex; align-items: center; gap: 7px; flex: none; height: 25px; margin-top: 2px; padding-left: 5px; background: linear-gradient(#fbfbfb, #eee); }
.bigx { width: 13px; height: 13px; margin-left: 3px; }
.searchrow { display: flex; flex: none; height: 25px; margin: 1px 0 0 1px; }
.searchbox { width: 172px; border: 1px solid #8a8a8a; background: #fff; color: #999; line-height: 22px; padding-left: 2px; }
.searchbtn { display: flex; align-items: center; justify-content: center; width: 25px; background: #f3f3f3; }
.sico { width: 14px; height: 14px; }
.tree { border: 1px solid #8a8a8a; background: #fff; }
.main-tree { flex: none; height: 385px; padding: 1px 0 0 7px; }
.node { display: flex; align-items: center; height: 16px; gap: 2px; }
.node.leaf { margin-top: 2px; padding-left: 32px; }
.chev { width: 7px; height: 7px; margin: -3px 2px 0 1px; border: 2px solid #555; border-top: 0; border-left: 0; transform: rotate(45deg); flex: none; }
.chev-r { width: 6px; height: 6px; margin: 0 2px 0 2px; border: 2px solid #bbb; border-bottom: 0; border-left: 0; transform: rotate(45deg); flex: none; }
.dots { width: 3px; height: 1px; border-top: 1px dotted #777; flex: none; }
.node span { margin-left: 3px; }
.elbow { width: 8px; height: 9px; margin: -8px 0 0 -9px; border-left: 1px dotted #777; border-bottom: 1px dotted #777; flex: none; }
.node .picked { display: flex; align-items: center; gap: 5px; width: 57px; height: 16px; margin-left: 0; padding-left: 4px; background: #316ac5; color: #111; }
.picked .mono { margin-left: 2px; }
.gear { width: 11px; height: 11px; flex: none; }
.cadbar { margin-top: 5px; }
.cad-tree { flex: 1; margin-top: 1px; padding: 0 0 0 9px; line-height: 14px; }
.layer { display: flex; align-items: center; gap: 2px; height: 14px; }
.layer:first-child { margin-top: 2px; }
.check { display: inline-block; width: 13px; height: 12px; border: 1px solid #555; background: #fff; flex: none; }
.check.on { box-shadow: inset 0 0 0 2px #fff, inset 0 0 0 6px #333; }
.check.pale { width: 11px; height: 11px; border-color: #aaa; background: transparent; }
.layer > span { margin-left: 1px; }

/* Editor column */
.editor { display: flex; flex-direction: column; width: 1027px; overflow: hidden; }
.row-a { height: 25px; flex: none; }
.row-b { height: 25px; margin-top: 3px; flex: none; }
.row-c { height: 26px; margin-top: 4px; flex: none; }
.toolbar.block { display: inline-flex; height: 100%; padding: 0 3px; background: #f8f8f8; vertical-align: top; }
.toolbar.block.full { display: flex; }
.block .sep { margin: 0 -1.5px; }
.combo { display: inline-flex; align-items: center; flex: none; height: 25px; }
.combo .val { height: 100%; padding-left: 2px; background: #fff; line-height: 25px; }
.combo .caret { margin: 0 5px 0 3px; }
.combo.c1 { margin-right: 3px; }
.combo.c1 .val { width: 45px; }
.combo.c1 .caret { margin-right: 3px; }
.combo.c2 .val { width: 58px; }
.combo.c3 { margin-left: -2px; }
.combo.c3 .val { width: 44px; }
.combo.c3 .caret { margin-right: 0; }
.combo.c4 .val { width: 46px; }
.combo.c4 .caret { margin: 0 10px 0 2px; }
.row-b .toolbar { gap: 0; }
.row-b .grip { margin-right: 1px; }
.row-b .block .sep { margin: 0 4px 0 2px; }
.tog { display: inline-flex; align-items: center; gap: 3px; flex: none; height: 23px; padding: 0 2px 0 1px; border: 1px solid #1a7fd4; background: #e7f1fa; }
.ti.pick { margin-left: 5px; }
.cad { display: block; flex: none; width: 1027px; height: 620px; background: #000; }
.axis-label text { fill: #bbb; font: 16px "Liberation Sans", sans-serif; }
.axis-label text:not([textLength]) { text-anchor: middle; font-size: 15px; }
.axis-label text.sm { font-size: 14px; }
.note text { fill: #ddd; font: 33px "Liberation Sans", sans-serif; white-space: pre; }
.dim { fill: #ccc; font: 14px "Liberation Sans", sans-serif; }
.dim.faint { fill: #999; }
.label { fill: #0a44c0; font: 22px "Liberation Sans", sans-serif; }

/* Snap bar */
.snapbar { display: flex; flex: none; height: 30px; margin-top: 1px; }
.snapbar .toolbar { height: 30px; gap: 5px; }
.snapbar .grip { margin: 0 -3px 0 1px; }
.snapbar .tog { height: 24px; }
.snapbar .tog + .tog { margin-left: -5px; }
.ti.ortho { margin-left: 2px; }
.tog.pt { gap: 4px; padding-left: 2px; }
.toolbar.coords { gap: 2px; margin-left: 5px; padding-left: 8px; padding-right: 7px; color: #333; }
.coords .off { font-size: 13px; }
.coords .gapl { margin-left: 4px; }
.coords .sep.gapl { margin: 0 -1px 0 2px; }
.spin { position: relative; display: inline-block; width: 58px; height: 22px; padding-right: 18px; border: 1px solid #777; border-radius: 1px; background: #f0f0f0; color: #999; line-height: 20px; text-align: right; font-family: "Liberation Sans", sans-serif; font-size: 13px; flex: none; }
.spin.wide { width: 67px; }
.arrows { position: absolute; right: 3px; top: 4px; width: 0; height: 0; border: 3px solid transparent; border-bottom: 4px solid #555; border-top: 0; }
.arrows::after { content: ""; position: absolute; left: -3px; top: 9px; border: 3px solid transparent; border-top: 4px solid #555; border-bottom: 0; }
.rot { margin: 0 2px 0 7px; }

/* Rebar table */
.rebar { display: flex; flex: 1; min-height: 0; }
.dock { flex: none; width: 13px; padding: 3px 0 0 1px; background: radial-gradient(#bbb 1px, transparent 1.200px) 0 14px / 4px 4px; }
.dockx { display: block; width: 10px; height: 10px; background: #eee; border: 1px solid #777; }
.rebar-main { flex: 1; min-width: 0; overflow: hidden; }
.rebar-tools { display: flex; align-items: center; gap: 7px; height: 29px; padding: 3px 0 0 6px; background: linear-gradient(#f0f0f0 2px, #fafafa 2px); border-bottom: 1px solid #b5b5b5; white-space: nowrap; }
.rebar-tools .navsep { margin: 0 0 0 -4px; }
.nv { width: 12px; height: 14px; margin-right: 4px; flex: none; }
.shut { margin-left: 3px; }
.rebar-tools .total { color: #222; letter-spacing: .2px; }
.rebar-table { width: 1013px; border-collapse: collapse; table-layout: fixed; }
.c-head { width: 34px; } .c-name { width: 72px; } .c-dia { width: 57px; } .c-grade { width: 35px; } .c-fig { width: 33px; }
.c-shape { width: 211px; } .c-calc { width: 167px; } .c-desc { width: 155px; } .c-len { width: 61px; } .c-num { width: 39px; }
.c-lap { width: 39px; } .c-loss { width: 48px; } .c-wt { width: 62px; }
.rebar-table th, .rebar-table td { padding: 0 2px; border: 1px solid #b5b5b5; font-weight: normal; overflow: hidden; white-space: nowrap; }
.rebar-table thead th { height: 19px; background: linear-gradient(#fff, #ececec); text-align: center; line-height: 17px; }
.rebar-table thead th.cur { background: linear-gradient(#fbdc9c, #f4b850); color: #660099; }
.rebar-table tbody tr { height: 29px; }
.rebar-table tbody tr.tall { height: 34px; }
.rebar-table tbody th { background: linear-gradient(#f4f4f4, #fff); text-align: center; font: 10px "Liberation Mono", monospace; }
.rebar-table tbody th.sel { background: #ffd28a; color: #660099; }
.rebar-table td { background: #c8ffd6; }
.rebar-table td.focus { background: #aae8d4; }
.rebar-table td.name { border-right: 1px solid #000; white-space: normal; line-height: 12px; }
.rebar-table td.ctr { text-align: center; }
.shape { display: flex; align-items: center; justify-content: center; gap: 2px; }
.hook { width: 121px; height: 15px; margin-top: 1px; border: 2px solid #000; border-top: 0; color: #e00; font: 10px/12px "Liberation Mono", monospace; text-align: center; }
.bar { width: 157px; height: 15px; margin-top: 1px; border-bottom: 2px solid #000; color: #e00; font: 10px/12px "Liberation Mono", monospace; text-align: center; }

/* Red note arrow drawn on the screenshot */
.callout { position: absolute; left: 0; top: 0; width: 1322px; height: 983px; pointer-events: none; }
```
